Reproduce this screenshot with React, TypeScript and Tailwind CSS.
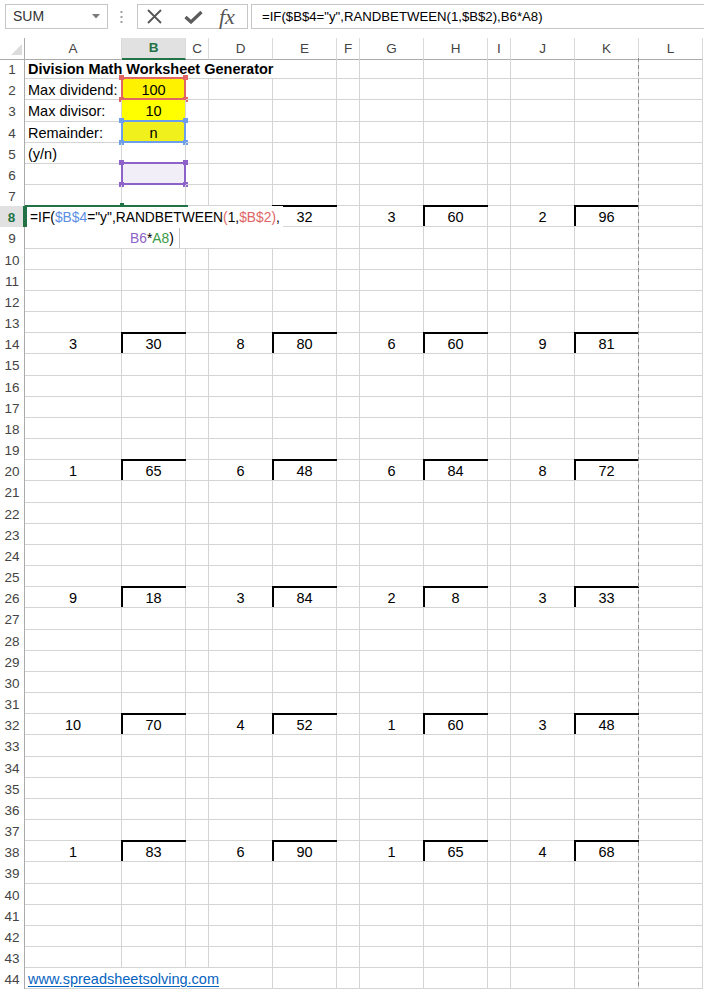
import React from 'react';

// column widths: row header, then A..L
const LETTERS = ['A', 'B', 'C', 'D', 'E', 'F', 'G', 'H', 'I', 'J', 'K', 'L'];
const GRID = 'grid grid-cols-[25px_97px_64px_23px_64px_64px_23px_64px_64px_23px_64px_64px_64px]';

const rowTop = (n: number) => Math.round(58 + (n - 1) * 21.167);
const rowH = (n: number) => rowTop(n + 1) - rowTop(n);

// divisor / dividend pairs per problem row, columns (A,B) (D,E) (G,H) (J,K)
const PROBLEMS: Record<number, (number | null)[]> = {
  8: [null, null, null, 32, 3, 60, 2, 96],
  14: [3, 30, 8, 80, 6, 60, 9, 81],
  20: [1, 65, 6, 48, 6, 84, 8, 72],
  26: [9, 18, 3, 84, 2, 8, 3, 33],
  32: [10, 70, 4, 52, 1, 60, 3, 48],
  38: [1, 83, 6, 90, 1, 65, 4, 68],
};
const PAIR_COLS = [0, 1, 3, 4, 6, 7, 9, 10];

type Cell = {
  text?: React.ReactNode;
  center?: boolean;
  bold?: boolean;
  span?: string;
  bg?: string;
  bracket?: boolean;
  mark?: 'red' | 'blue' | 'purple';
  link?: boolean;
};

const MARKS = {
  red: { border: 'border-[#e06666]', dot: 'bg-[#e06666]' },
  blue: { border: 'border-[#6d9eeb]', dot: 'bg-[#6d9eeb]' },
  purple: { border: 'border-[#8e63c9]', dot: 'bg-[#8e63c9]' },
};

function RangeMark({ color }: { color: 'red' | 'blue' | 'purple' }) {
  const m = MARKS[color];
  return (
    <span className={`absolute left-[-1px] top-[-2px] right-[-1px] bottom-[-1px] border-2 ${m.border}`}>
      <span className={`absolute left-[-4px] top-[-4px] w-[5px] h-[5px] ${m.dot}`} />
      <span className={`absolute right-[-4px] top-[-4px] w-[5px] h-[5px] ${m.dot}`} />
      <span className={`absolute left-[-4px] bottom-[-4px] w-[5px] h-[5px] ${m.dot}`} />
      <span className={`absolute right-[-4px] bottom-[-4px] w-[5px] h-[5px] ${m.dot}`} />
    </span>
  );
}

function buildRow(n: number): Cell[] {
  const cells: Cell[] = LETTERS.map(() => ({}));
  if (n === 1) {
    return [{ text: 'Division Math Worksheet Generator', bold: true, span: 'col-span-5' }, ...cells.slice(5)];
  }
  if (n === 44) {
    return [{ text: 'www.spreadsheetsolving.com', link: true, span: 'col-span-4' }, ...cells.slice(4)];
  }
  if (n === 2) {
    cells[0] = { text: 'Max dividend:' };
    cells[1] = { text: '100', center: true, bg: 'bg-[#fff200]', mark: 'red' };
  }
  if (n === 3) {
    cells[0] = { text: 'Max divisor:' };
    cells[1] = { text: '10', center: true, bg: 'bg-[#ffff00]' };
  }
  if (n === 4) {
    cells[0] = { text: 'Remainder:' };
    cells[1] = { text: 'n', center: true, bg: 'bg-[#f0f01c]', mark: 'blue' };
  }
  if (n === 5) cells[0] = { text: '(y/n)' };
  if (n === 6) cells[1] = { bg: 'bg-[#f1eef8]', mark: 'purple' };
  const p = PROBLEMS[n];
  if (p) {
    p.forEach((v, i) => {
      const col = PAIR_COLS[i];
      if (v === null) return;
      cells[col] = { text: String(v), center: true, bracket: i % 2 === 1 };
    });
  }
  return cells;
}

function Row({ n }: { n: number }) {
  const cells = buildRow(n);
  const active = n === 8;
  return (
    <div className={`${GRID} ${rowH(n) === 22 ? 'h-[22px]' : 'h-[21px]'}`}>
      <div
        className={`flex items-center justify-center pt-[2px] leading-none text-[13.5px] ${
          active
            ? 'bg-[#e1e1e1] border-r-2 border-[#217346] text-[#217346] font-bold'
            : 'border-r border-[#ababab] text-[#444]'
        }`}
      >
        {n}
      </div>
      {cells.map((c, i) => (
        <div
          key={i}
          className={`relative flex items-center pt-[2px] leading-none whitespace-nowrap border-r border-b border-[#d4d4d4] text-[14.5px] ${
            c.span ?? ''
          } ${c.bg ?? ''} ${c.center ? 'justify-center' : 'pl-[3px]'} ${c.bold ? 'font-bold' : ''}`}
        >
          {c.bracket && (
            <span className="absolute left-[-1px] top-[-1px] right-[-1px] bottom-0 border-t-2 border-l-2 border-black" />
          )}
          {c.mark && <RangeMark color={c.mark} />}
          {c.link ? (
            <span className="text-[#0563c1] underline underline-offset-2">{c.text}</span>
          ) : (
            <span className="relative">{c.text}</span>
          )}
        </div>
      ))}
    </div>
  );
}

function Toolbar() {
  return (
    <div className="h-[38px] flex items-start">
      <div className="mt-[4px] ml-[5px] w-[103px] h-[25px] shrink-0 border border-[#c6c6c6] flex items-center justify-between pl-[7px] pr-[7px] text-[14px] text-[#333]">
        <span>SUM</span>
        <svg width="8" height="5" viewBox="0 0 8 5">
          <polygon points="0,0 8,0 4,4.5" fill="#7a7a7a" />
        </svg>
      </div>
      <svg className="mt-[11px] ml-[12px] shrink-0" width="3" height="13" viewBox="0 0 3 13">
        <rect x="0.5" y="0" width="2" height="2" fill="#a0a0a0" />
        <rect x="0.5" y="5" width="2" height="2" fill="#a0a0a0" />
        <rect x="0.5" y="10" width="2" height="2" fill="#a0a0a0" />
      </svg>
      <div className="mt-[4px] ml-[14px] w-[111px] h-[25px] shrink-0 border border-[#c6c6c6] flex items-center pl-[9px]">
        <svg width="15" height="15" viewBox="0 0 15 15">
          <path d="M1 1 L14 14 M14 1 L1 14" stroke="#555" strokeWidth="1.8" fill="none" />
        </svg>
        <svg className="ml-[22px]" width="19" height="14" viewBox="0 0 19 14">
          <path d="M1.5 7 L7 12 L17.5 2" stroke="#5c5c5c" strokeWidth="3.2" fill="none" />
        </svg>
        <span className="ml-[16px] font-['Liberation_Serif',serif] italic text-[22px] leading-none text-[#555]">fx</span>
      </div>
      <div className="mt-[4px] ml-[3px] w-[480px] h-[25px] shrink-0 border border-[#c6c6c6] flex items-center pl-[10px] text-[13.2px] text-black whitespace-nowrap">
        =IF($B$4="y",RANDBETWEEN(1,$B$2),B6*A8)
      </div>
    </div>
  );
}

function ColumnHeader() {
  return (
    <div className={`${GRID} h-[20px]`}>
      <div className="relative border-r border-b border-r-[#ababab] border-b-[#ababab]">
        <svg className="absolute left-0 top-0" width="24" height="19" viewBox="0 0 24 19">
          <polygon points="11,17 22,17 22,6" fill="#dcdcdc" />
        </svg>
      </div>
      {LETTERS.map((l) => (
        <div
          key={l}
          className={`flex items-center justify-center text-[13.5px] border-r border-r-[#dadada] ${
            l === 'B'
              ? 'bg-[#e1e1e1] border-b-2 border-b-[#217346] text-[#217346] font-bold'
              : 'border-b border-b-[#ababab] text-[#444]'
          }`}
        >
          {l}
        </div>
      ))}
    </div>
  );
}

export default function App() {
  const rows = Array.from({ length: 44 }, (_, i) => i + 1);
  return (
    <div className="relative w-[704px] h-[989px] overflow-hidden bg-white text-black font-['Liberation_Sans',Arial,sans-serif]">
      <Toolbar />
      <ColumnHeader />
      {rows.map((n) => (
        <Row key={n} n={n} />
      ))}

      {/* page break */}
      <div className="absolute left-[638px] top-[58px] bottom-0 w-px bg-[repeating-linear-gradient(to_bottom,#8c8c8c_0_4px,transparent_4px_7px)]" />

      {/* in-cell formula editor over A8 */}
      <div className="absolute left-[25px] top-[206px] w-[258px] h-[42px] bg-white text-[13.8px] leading-none whitespace-nowrap">
        <div className="h-[21px] flex items-center pt-[2px] pl-[5px]">
          <span>=IF(</span>
          <span className="text-[#5b8fe5]">$B$4</span>
          <span>="y",RANDBETWEEN</span>
          <span className="text-[#e06666]">(</span>
          <span>1,</span>
          <span className="text-[#e06666]">$B$2</span>
          <span className="text-[#e06666]">)</span>
          <span>,</span>
        </div>
        <div className="h-[21px] flex items-center pt-[2px] pl-[105px]">
          <span className="text-[#8e63c9]">B6</span>
          <span>*</span>
          <span className="text-[#3a9a47]">A8</span>
          <span>)</span>
        </div>
      </div>
      <div className="absolute left-[179px] top-[228px] w-px h-[20px] bg-[#c6c6c6]" />
      <div className="absolute left-[25px] top-[205px] w-[163px] h-[2px] bg-[#217346]" />
      <div className="absolute left-[120px] top-[203px] w-[4px] h-[4px] bg-[#217346]" />
      <div className="absolute left-[25px] top-[206px] w-[2px] h-[21px] bg-[#217346]" />
    </div>
  );
}
